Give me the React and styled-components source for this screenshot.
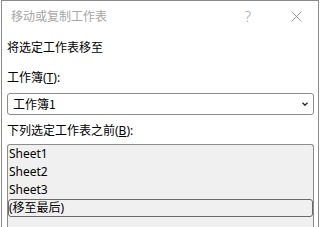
import React from "react";
import styled, { createGlobalStyle } from "styled-components";

const Global = createGlobalStyle`
  html, body { margin: 0; padding: 0; background: #ffffff; }
  body { font-family: "Noto Sans", "Noto Sans CJK SC", sans-serif; font-size: 12px; color: #000; }
`;

const Dialog = styled.div`
  box-sizing: border-box;
  width: 318px;
  height: 227px;
  margin-left: 1px;
  border: 1px solid #8a8a8a;
  border-bottom: none;
  background: #fff;
  overflow: hidden;
  display: flex;
  flex-direction: column;
`;

const TitleBar = styled.div`
  height: 30px;
  display: flex;
  align-items: center;
  padding-left: 9px;
  flex-shrink: 0;
`;

const Title = styled.div`
  flex: 1;
  color: #a6a6a6;
  font-size: 12px;
  line-height: 16px;
  font-family: "Noto Sans CJK SC", sans-serif;
`;

const HelpIcon = styled.div`
  width: 10px;
  margin-right: 38px;
  color: #a8a8a8;
  font-size: 15px;
  font-weight: 300;
  line-height: 16px;
  font-family: "Noto Sans", sans-serif;
  text-align: center;
`;

const CloseIcon = styled.div`
  width: 11px;
  height: 11px;
  margin-right: 16px;
  display: flex;
`;

const Body = styled.div`
  padding: 0 4px 0 5px;
  display: flex;
  flex-direction: column;
  flex: 1;
  min-height: 0;
`;

const Text = styled.div`
  line-height: 16px;
  height: 16px;
  margin-top: ${(p) => p.$mt}px;
  font-family: "Noto Sans", "Noto Sans CJK SC", sans-serif;
  white-space: nowrap;
`;

const Combo = styled.div`
  box-sizing: border-box;
  margin-top: 7px;
  height: 22px;
  border: 1px solid #8c8c8c;
  border-radius: 3px;
  display: flex;
  align-items: center;
  padding: 0 5px 0 5px;
  font-family: "Noto Sans CJK SC", sans-serif;
`;

const ComboText = styled.div`
  flex: 1;
  line-height: 16px;
`;

const List = styled.div`
  box-sizing: border-box;
  margin-top: 5px;
  flex: 1;
  background: #f0f0f0;
  border: 1px solid #8c8c8c;
  border-bottom: none;
  border-radius: 3px 3px 0 0;
  display: flex;
  flex-direction: column;
`;

const Item = styled.div`
  box-sizing: border-box;
  height: 18px;
  line-height: 16px;
  padding-left: ${(p) => (p.$selected ? 0 : 1)}px;
  border: ${(p) => (p.$selected ? "1px solid #6a6a6a" : "none")};
  border-radius: ${(p) => (p.$selected ? "3px" : "0")};
  display: flex;
  align-items: center;
  font-family: "Noto Sans", "Noto Sans CJK SC", sans-serif;
`;

export default function App() {
  return (
    <>
      <Global />
      <Dialog>
        <TitleBar>
          <Title>移动或复制工作表</Title>
          <HelpIcon>?</HelpIcon>
          <CloseIcon>
            <svg width="11" height="11" viewBox="0 0 11 11">
              <path d="M0.5 0.5 L10.5 10.5 M10.5 0.5 L0.5 10.5" stroke="#a0a0a0" strokeWidth="1" fill="none" />
            </svg>
          </CloseIcon>
        </TitleBar>
        <Body>
          <Text $mt={9}>将选定工作表移至</Text>
          <Text $mt={14}>
            工作簿(<u>T</u>):
          </Text>
          <Combo>
            <ComboText>工作簿1</ComboText>
            <svg width="6" height="4" viewBox="0 0 6 4">
              <path d="M0.5 0.8 L3 3.2 L5.5 0.8" stroke="#222" strokeWidth="1.3" fill="none" />
            </svg>
          </Combo>
          <Text $mt={8}>
            下列选定工作表之前(<u>B</u>):
          </Text>
          <List>
            <Item>Sheet1</Item>
            <Item>Sheet2</Item>
            <Item>Sheet3</Item>
            <Item $selected>(移至最后)</Item>
          </List>
        </Body>
      </Dialog>
    </>
  );
}
